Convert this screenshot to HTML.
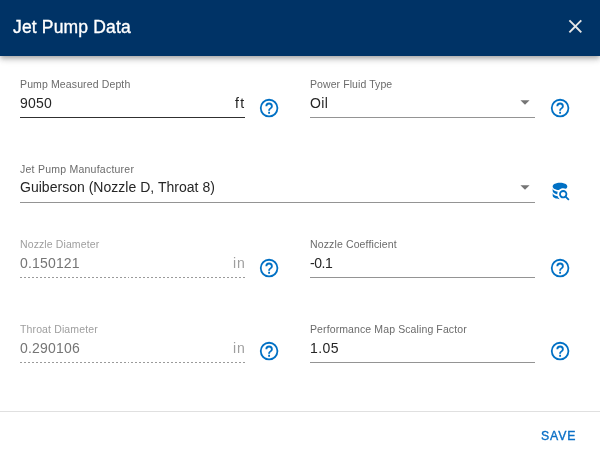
<!DOCTYPE html>
<html lang="en">
<head>
<meta charset="utf-8">
<title>Jet Pump Data</title>
<style>
*{box-sizing:border-box;margin:0;padding:0}
html,body{width:600px;height:457px;overflow:hidden;background:#fff}
body{font-family:"Liberation Sans",sans-serif;position:relative;color:#212121}
.hdr{position:absolute;left:0;top:0;width:600px;height:56px;background:#003366;box-shadow:0 2px 4px -1px rgba(0,0,0,.2),0 4px 5px 0 rgba(0,0,0,.14),0 1px 10px 0 rgba(0,0,0,.12);z-index:2}
.ttl{position:absolute;left:13px;top:16px;font-size:17.5px;line-height:22px;color:#fff;font-weight:normal;-webkit-text-stroke:0.35px #fff;white-space:nowrap;letter-spacing:.16px;will-change:transform}
.abs{position:absolute;white-space:nowrap;will-change:transform}
.lbl{font-size:10.5px;line-height:14px;color:#6b6b6b}
.val{font-size:14px;line-height:18px;color:#262626}
.dis .lbl, .lbl.dis{color:#9e9e9e}
.val.dis{color:#757575}
.ul{position:absolute;height:1px;background:#949494}
.ul.dark{background:#303030}
.ul.dash{background:repeating-linear-gradient(to right,#9e9e9e 0,#9e9e9e 2.1px,transparent 2.1px,transparent 3.375px)}
.suf{font-size:14px;line-height:18px;color:#212121}
.suf.dis{color:#9e9e9e}
svg.ic{position:absolute;width:22px;height:22px}
svg.hp{width:22.2px;height:22.2px}
.dash{position:absolute;height:1px;background:repeating-linear-gradient(to right,#9a9a9a 0,#9a9a9a 2px,transparent 2px,transparent 4px)}
.div{position:absolute;left:0;top:411px;width:600px;height:1px;background:#e0e0e0}
.save{will-change:transform;position:absolute;font-size:12.25px;line-height:16px;font-weight:normal;-webkit-text-stroke:0.35px #0a6fc6;color:#0a6fc6;letter-spacing:.85px}
</style>
</head>
<body>
<div class="hdr">
  <div class="ttl">Jet Pump Data</div>
  <svg class="ic" style="left:564.1px;top:15.3px;width:22.7px;height:22.7px" viewBox="0 0 24 24"><path fill="#e6e6e6" d="M19,6.41L17.59,5L12,10.59L6.410,5L5,6.41L10.59,12L5,17.59L6.41,19L12,13.41L17.59,19L19,17.59L13.41,12L19,6.41Z"/></svg>
</div>

<!-- Row 1 -->
<div class="abs lbl" style="left:19.65px;top:77px;letter-spacing:.125px">Pump Measured Depth</div>
<div class="abs val" style="left:20px;top:94px;letter-spacing:.2px">9050</div>
<div class="abs suf" style="left:235px;top:94px;letter-spacing:1.3px">ft</div>
<div class="ul dark" style="left:20px;top:117px;width:225px"></div>
<svg class="ic hp" style="left:257.7px;top:96.7px" viewBox="0 0 24 24"><path fill="#0070c4" d="M11,18H13V16H11V18M12,2A10,10 0 0,0 2,12A10,10 0 0,0 12,22A10,10 0 0,0 22,12A10,10 0 0,0 12,2M12,20C7.59,20 4,16.41 4,12C4,7.59 7.59,4 12,4C16.41,4 20,7.59 20,12C20,16.41 16.41,20 12,20M12,6A4,4 0 0,0 8,10H10A2,2 0 0,1 12,8A2,2 0 0,1 14,10C14,12 11,11.75 11,15H13C13,12.750 16,12.500 16,10A4,4 0 0,0 12,6Z"/></svg>

<div class="abs lbl" style="left:309.65px;top:77px;letter-spacing:.083px">Power Fluid Type</div>
<div class="abs val" style="left:310px;top:94px;letter-spacing:.4px">Oil</div>
<svg class="ic" style="left:514px;top:91px" viewBox="0 0 24 24"><path fill="#757575" d="M7,10L12,15L17,10H7Z"/></svg>
<div class="ul" style="left:310px;top:117px;width:225px"></div>
<svg class="ic hp" style="left:548.7px;top:96.7px" viewBox="0 0 24 24"><path fill="#0070c4" d="M11,18H13V16H11V18M12,2A10,10 0 0,0 2,12A10,10 0 0,0 12,22A10,10 0 0,0 22,12A10,10 0 0,0 12,2M12,20C7.59,20 4,16.41 4,12C4,7.59 7.59,4 12,4C16.41,4 20,7.59 20,12C20,16.41 16.41,20 12,20M12,6A4,4 0 0,0 8,10H10A2,2 0 0,1 12,8A2,2 0 0,1 14,10C14,12 11,11.75 11,15H13C13,12.750 16,12.500 16,10A4,4 0 0,0 12,6Z"/></svg>

<!-- Row 2 -->
<div class="abs lbl" style="left:20px;top:162px;letter-spacing:.24px">Jet Pump Manufacturer</div>
<div class="abs val" style="left:19.9px;top:178px;letter-spacing:.02px">Guiberson (Nozzle D, Throat 8)</div>
<svg class="ic" style="left:514px;top:176px" viewBox="0 0 24 24"><path fill="#757575" d="M7,10L12,15L17,10H7Z"/></svg>
<div class="ul" style="left:20px;top:202px;width:515px"></div>
<svg class="ic" style="left:548.85px;top:180.4px" viewBox="0 0 24 24"><path fill="#0070c4" d="M18.68,12.32C16.92,10.56 14.07,10.57 12.32,12.33C10.56,14.09 10.56,16.94 12.32,18.69C13.81,20.17 16.11,20.43 17.89,19.32L21,22.39L22.39,21L19.3,17.89C20.43,16.12 20.17,13.8 18.68,12.32M17.27,17.27C16.29,18.25 14.71,18.24 13.73,17.27C12.76,16.29 12.75,14.71 13.73,13.73C14.71,12.76 16.29,12.75 17.27,13.73C18.24,14.71 18.24,16.29 17.27,17.27M10.9,20.1C10.25,19.44 9.74,18.65 9.42,17.78C6.27,17.25 4,15.76 4,14V17C4,19.21 7.58,21 12,21V21C11.59,20.73 11.24,20.43 10.9,20.1M4,9V12C4,13.68 6.07,15.12 9,15.7C9,15.63 9,15.57 9,15.5C9,14.57 9.2,13.65 9.58,12.81C6.34,12.3 4,10.79 4,9M12,3C7.58,3 4,4.79 4,7C4,9 7,10.68 10.85,11H10.9C12.1,9.74 13.76,9 15.5,9C16.41,9 17.31,9.19 18.14,9.56C19.17,9.09 19.87,8.12 20,7C20,4.79 16.42,3 12,3Z"/></svg>

<!-- Row 3 -->
<div class="abs lbl dis" style="left:19.65px;top:237px;letter-spacing:.11px">Nozzle Diameter</div>
<div class="abs val dis" style="left:20px;top:254px;letter-spacing:.17px">0.150121</div>
<div class="abs suf dis" style="left:233.4px;top:254px;letter-spacing:.8px">in</div>
<div class="dash" style="left:20px;top:277px;width:108px"></div><div class="dash" style="left:128px;top:277px;width:1px"></div><div class="dash" style="left:131px;top:277px;width:114px"></div>
<svg class="ic hp" style="left:257.7px;top:256.5px" viewBox="0 0 24 24"><path fill="#0070c4" d="M11,18H13V16H11V18M12,2A10,10 0 0,0 2,12A10,10 0 0,0 12,22A10,10 0 0,0 22,12A10,10 0 0,0 12,2M12,20C7.59,20 4,16.41 4,12C4,7.59 7.59,4 12,4C16.41,4 20,7.59 20,12C20,16.41 16.41,20 12,20M12,6A4,4 0 0,0 8,10H10A2,2 0 0,1 12,8A2,2 0 0,1 14,10C14,12 11,11.75 11,15H13C13,12.750 16,12.500 16,10A4,4 0 0,0 12,6Z"/></svg>

<div class="abs lbl" style="left:309.65px;top:237px;letter-spacing:.13px">Nozzle Coefficient</div>
<div class="abs val" style="left:310.3px;top:254px;letter-spacing:-.43px">-0.1</div>
<div class="ul" style="left:310px;top:277px;width:225px"></div>
<svg class="ic hp" style="left:548.7px;top:256.5px" viewBox="0 0 24 24"><path fill="#0070c4" d="M11,18H13V16H11V18M12,2A10,10 0 0,0 2,12A10,10 0 0,0 12,22A10,10 0 0,0 22,12A10,10 0 0,0 12,2M12,20C7.59,20 4,16.41 4,12C4,7.59 7.59,4 12,4C16.41,4 20,7.59 20,12C20,16.41 16.41,20 12,20M12,6A4,4 0 0,0 8,10H10A2,2 0 0,1 12,8A2,2 0 0,1 14,10C14,12 11,11.75 11,15H13C13,12.750 16,12.500 16,10A4,4 0 0,0 12,6Z"/></svg>

<!-- Row 4 -->
<div class="abs lbl dis" style="left:20.15px;top:322px;letter-spacing:.13px">Throat Diameter</div>
<div class="abs val dis" style="left:20px;top:339px;letter-spacing:.19px">0.290106</div>
<div class="abs suf dis" style="left:233.4px;top:339px;letter-spacing:.8px">in</div>
<div class="dash" style="left:20px;top:362px;width:108px"></div><div class="dash" style="left:128px;top:362px;width:1px"></div><div class="dash" style="left:131px;top:362px;width:114px"></div>
<svg class="ic hp" style="left:257.7px;top:340.4px" viewBox="0 0 24 24"><path fill="#0070c4" d="M11,18H13V16H11V18M12,2A10,10 0 0,0 2,12A10,10 0 0,0 12,22A10,10 0 0,0 22,12A10,10 0 0,0 12,2M12,20C7.59,20 4,16.41 4,12C4,7.59 7.59,4 12,4C16.41,4 20,7.59 20,12C20,16.41 16.41,20 12,20M12,6A4,4 0 0,0 8,10H10A2,2 0 0,1 12,8A2,2 0 0,1 14,10C14,12 11,11.75 11,15H13C13,12.750 16,12.500 16,10A4,4 0 0,0 12,6Z"/></svg>

<div class="abs lbl" style="left:309.75px;top:322px;letter-spacing:.11px">Performance Map Scaling Factor</div>
<div class="abs val" style="left:310px;top:339px;letter-spacing:.4px">1.05</div>
<div class="ul" style="left:310px;top:362px;width:225px"></div>
<svg class="ic hp" style="left:548.7px;top:340.4px" viewBox="0 0 24 24"><path fill="#0070c4" d="M11,18H13V16H11V18M12,2A10,10 0 0,0 2,12A10,10 0 0,0 12,22A10,10 0 0,0 22,12A10,10 0 0,0 12,2M12,20C7.59,20 4,16.41 4,12C4,7.59 7.59,4 12,4C16.41,4 20,7.59 20,12C20,16.41 16.41,20 12,20M12,6A4,4 0 0,0 8,10H10A2,2 0 0,1 12,8A2,2 0 0,1 14,10C14,12 11,11.75 11,15H13C13,12.750 16,12.500 16,10A4,4 0 0,0 12,6Z"/></svg>

<div class="div"></div>
<div class="save" style="left:541.2px;top:428.2px">SAVE</div>
</body>
</html>
